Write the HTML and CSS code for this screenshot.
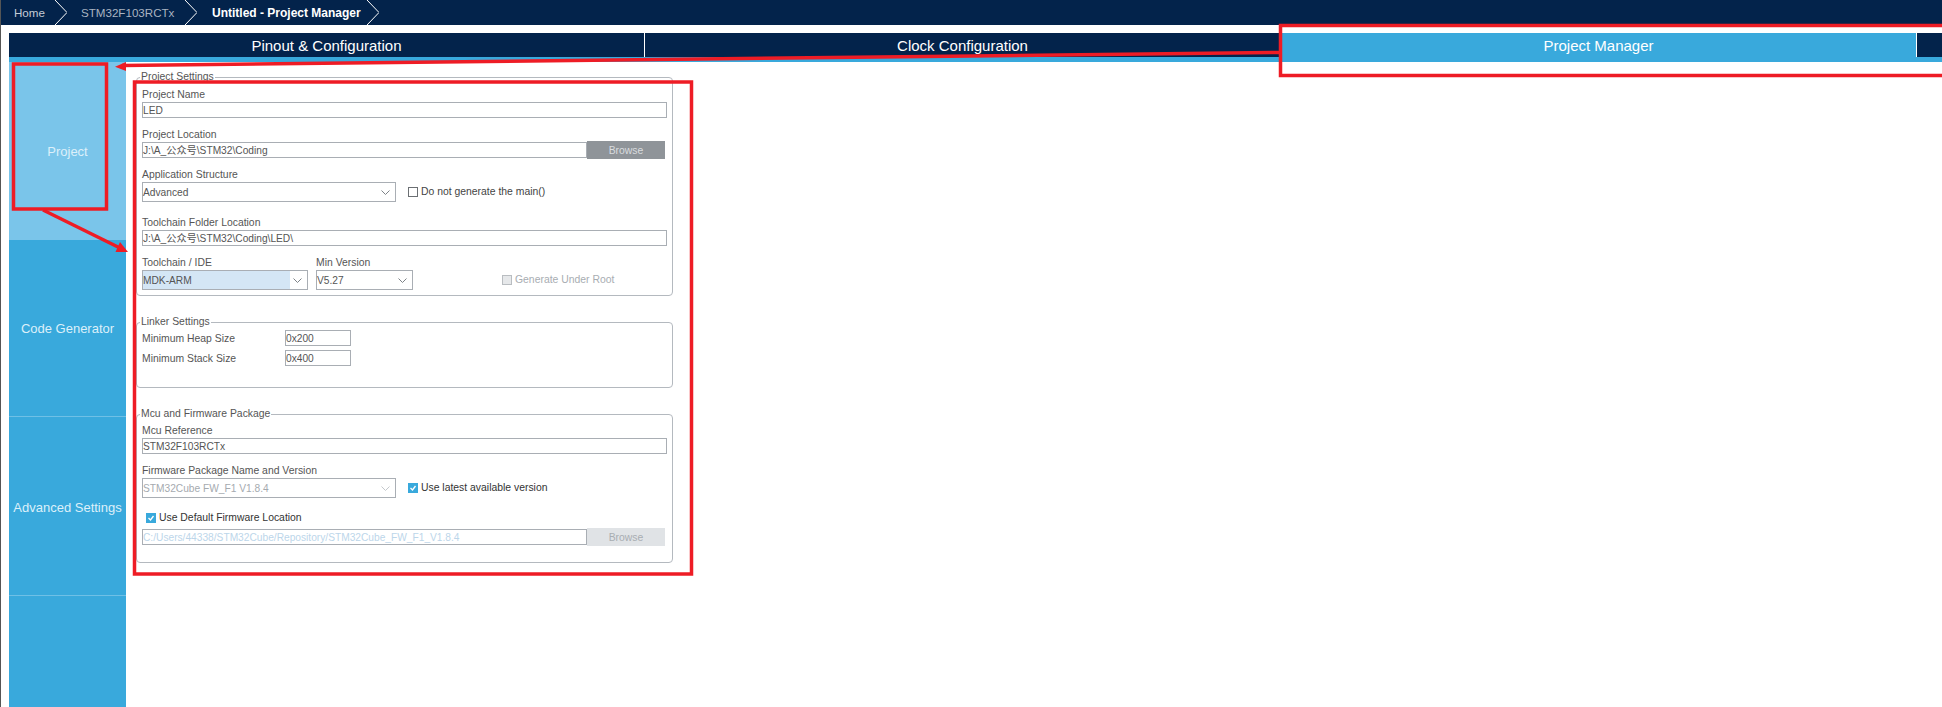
FILE: index.html
```html
<!DOCTYPE html>
<html lang="en">
<head>
<meta charset="UTF-8">
<meta name="viewport" content="width=device-width, initial-scale=1.0">
<title>Untitled - Project Manager</title>
<link rel="stylesheet" href="styles.css">
</head>
<body>
<nav class="crumbs">
    <span class="crumb crumb-home">Home</span>
    <svg class="chevron chevron-first" viewBox="0 0 12 25"><path d="M0 0 L12 12.5 L0 25"/></svg>
    <span class="crumb crumb-mcu">STM32F103RCTx</span>
    <svg class="chevron" viewBox="0 0 12 25"><path d="M0 0 L12 12.5 L0 25"/></svg>
    <span class="crumb crumb-current">Untitled - Project Manager</span>
    <svg class="chevron" viewBox="0 0 12 25"><path d="M0 0 L12 12.5 L0 25"/></svg>
</nav>

<div class="tabs">
    <div class="tab">Pinout &amp; Configuration</div>
    <div class="tab">Clock Configuration</div>
    <div class="tab tab-active">Project Manager</div>
    <div class="tab"></div>
</div>
<div class="strip"></div>

<div class="main">
    <aside class="side">
        <div class="side-item side-project side-active">Project</div>
        <div class="side-item side-code">Code Generator</div>
        <div class="side-item side-advanced">Advanced Settings</div>
        <div class="side-item side-rest"></div>
    </aside>

    <form class="content">
        <fieldset class="group">
            <legend>Project Settings</legend>
            <div class="field">
                <label>Project Name</label>
                <div class="input">LED</div>
            </div>
            <div class="field">
                <label>Project Location</label>
                <div class="row">
                    <div class="input input-path">J:\A_公众号\STM32\Coding</div>
                    <button type="button" class="browse">Browse</button>
                </div>
            </div>
            <div class="field field-wide">
                <label>Application Structure</label>
                <div class="row">
                    <div class="select select-long">
                        <span>Advanced</span>
                        <svg class="arrow" viewBox="0 0 9 5"><path d="M0.5 0.5 L4.5 4.5 L8.5 0.5"/></svg>
                    </div>
                    <div class="check"><i class="box"></i>Do not generate the main()</div>
                </div>
            </div>
            <div class="field">
                <label>Toolchain Folder Location</label>
                <div class="input">J:\A_公众号\STM32\Coding\LED\</div>
            </div>
            <div class="field field-last">
                <div class="row row-tool">
                    <div>
                        <label>Toolchain / IDE</label>
                        <div class="select select-ide">
                            <span class="picked">MDK-ARM</span>
                            <svg class="arrow" viewBox="0 0 9 5"><path d="M0.5 0.5 L4.5 4.5 L8.5 0.5"/></svg>
                        </div>
                    </div>
                    <div>
                        <label>Min Version</label>
                        <div class="select select-version">
                            <span>V5.27</span>
                            <svg class="arrow" viewBox="0 0 9 5"><path d="M0.5 0.5 L4.5 4.5 L8.5 0.5"/></svg>
                        </div>
                    </div>
                    <div class="check check-off check-root"><i class="box"></i>Generate Under Root</div>
                </div>
            </div>
        </fieldset>

        <fieldset class="group group-linker">
            <legend>Linker Settings</legend>
            <div class="size-row">
                <label>Minimum Heap Size</label>
                <div class="input input-size">0x200</div>
            </div>
            <div class="size-row">
                <label>Minimum Stack Size</label>
                <div class="input input-size">0x400</div>
            </div>
        </fieldset>

        <fieldset class="group group-mcu">
            <legend>Mcu and Firmware Package</legend>
            <div class="field">
                <label>Mcu Reference</label>
                <div class="input">STM32F103RCTx</div>
            </div>
            <div class="field field-wide">
                <label>Firmware Package Name and Version</label>
                <div class="row">
                    <div class="select select-long select-off">
                        <span>STM32Cube FW_F1 V1.8.4</span>
                        <svg class="arrow" viewBox="0 0 9 5"><path d="M0.5 0.5 L4.5 4.5 L8.5 0.5"/></svg>
                    </div>
                    <div class="check check-dark">
                        <i class="box box-on"><svg viewBox="0 0 10 10"><path d="M2.5 5 L4.5 7 L7.5 3"/></svg></i>Use latest available version
                    </div>
                </div>
            </div>
            <div class="check check-default">
                <i class="box box-on"><svg viewBox="0 0 10 10"><path d="M2.5 5 L4.5 7 L7.5 3"/></svg></i>Use Default Firmware Location
            </div>
            <div class="row">
                <div class="input input-path input-off">C:/Users/44338/STM32Cube/Repository/STM32Cube_FW_F1_V1.8.4</div>
                <button type="button" class="browse browse-off">Browse</button>
            </div>
        </fieldset>
    </form>
</div>

<!-- red marks drawn on top of the screenshot -->
<svg class="marks" viewBox="0 0 1942 707">
    <rect x="13.5" y="64" width="93" height="145"/>
    <rect x="134.5" y="82" width="557" height="492"/>
    <path d="M1950 25.5 H1280.5 V75.5 H1950"/>
    <path d="M1280 52.5 L122 65.5"/>
    <polygon class="head" points="115,66.7 126,62 126,71"/>
    <path d="M43 210 L120 248"/>
    <polygon class="head" points="128,252 115.5,252 120,242"/>
</svg>
</body>
</html>
```

FILE: styles.css
```css
* {
    box-sizing: border-box;
}

html, body {
    height: 100%;
    margin: 0;
    overflow: hidden;
}

body {
    position: relative;
    display: flex;
    flex-direction: column;
    border-left: 1px solid #555;
    background-color: #fff;
    color: #555;
    font-family: "Liberation Sans", Arial, "Noto Sans CJK SC", sans-serif;
    font-size: 10.4px;
}

/* breadcrumb bar */
.crumbs {
    display: flex;
    align-items: center;
    height: 25px;
    padding-left: 13px;
    background-color: #03234b;
    flex-shrink: 0;
}

.crumb {
    font-size: 11.6px;
    color: #c3ccd6;
}

.crumb-home {
    width: 41px;
}

.crumb-mcu {
    width: 104px;
    color: #a9b4c1;
}

.crumb-current {
    width: 155px;
    color: #fff;
    font-weight: bold;
    font-size: 12px;
}

.chevron {
    width: 12px;
    height: 25px;
    margin-right: 15px;
    flex-shrink: 0;
}

.chevron-first {
    margin-right: 14px;
}

.chevron path {
    fill: none;
    stroke: #fff;
    stroke-width: 1;
}

/* main tabs */
.tabs {
    display: grid;
    grid-template-columns: 636px 636px 636px 1fr;
    height: 24px;
    margin: 8px 0 0 8px;
    background-color: #03234b;
    flex-shrink: 0;
}

.tab {
    display: flex;
    align-items: center;
    justify-content: center;
    padding-top: 1px;
    border-right: 1px solid #fff;
    color: #fff;
    font-size: 15px;
}

.tab:last-child {
    border-right: none;
}

.tab-active {
    background-color: #39a9dc;
}

.strip {
    height: 5px;
    margin-left: 8px;
    background-color: #39a9dc;
    flex-shrink: 0;
}

.main {
    display: flex;
    flex: 1;
    min-height: 0;
    padding-left: 8px;
}

/* left menu */
.side {
    display: flex;
    flex-direction: column;
    width: 117px;
    background-color: #39a9dc;
}

.side-item {
    display: flex;
    align-items: center;
    justify-content: center;
    border-bottom: 1px solid #6fc0e6;
    color: #dcf0fa;
    font-size: 13px;
}

.side-project {
    height: 178px;
}

.side-code {
    height: 177px;
}

.side-advanced {
    height: 179px;
    padding-top: 3px;
}

.side-rest {
    flex: 1;
    border-bottom: none;
}

.side-active {
    background-color: #7ac5ea;
    border-bottom: none;
}

/* settings panel */
.content {
    width: 547px;
    padding: 9px 0 0 10px;
    margin: 0;
}

.group {
    width: 537px;
    margin: 0 0 20px;
    padding: 4px 5px 5px;
    border: 1px solid #b4b9bf;
    border-radius: 4px;
}

.group-linker {
    padding: 2px 5px 21px;
}

.group-mcu {
    padding: 3px 5px 17px;
}

legend {
    padding: 0 1px;
    margin-left: -2px;
    line-height: 12px;
    font-size: 10.4px;
}

label {
    display: block;
    line-height: 14px;
    padding-top: 1px;
}

.field {
    margin-bottom: 9px;
}

.field-wide {
    margin-bottom: 13px;
}

.field-last {
    margin-bottom: 0;
}

.row {
    display: flex;
    align-items: center;
}

.row-tool {
    align-items: flex-end;
}

.input {
    height: 16px;
    line-height: 16px;
    border: 1px solid #a9aeb4;
    background-color: #fff;
    color: #555;
    font-size: 10.2px;
    white-space: nowrap;
}

.input-path {
    width: 445px;
    flex-shrink: 0;
}

.input-off {
    color: #bcd6ea;
}

.input-size {
    width: 66px;
}

.browse {
    width: 78px;
    height: 18px;
    margin: -1px 0;
    padding: 1px 0 0;
    border: none;
    background-color: #8f9499;
    color: #d9dcdf;
    font-family: inherit;
    font-size: 10.4px;
}

.browse-off {
    background-color: #e0e3e6;
    color: #a8adb2;
}

.select {
    display: flex;
    align-items: center;
    justify-content: space-between;
    height: 20px;
    padding: 0 5px 0 0;
    border: 1px solid #a9aeb4;
    background-color: #fff;
    color: #555;
    font-size: 10.2px;
    white-space: nowrap;
}

.select-long {
    width: 254px;
}

.select-ide {
    width: 166px;
    margin-right: 8px;
}

.select-version {
    width: 97px;
}

.select-off {
    color: #a5aaaf;
}

.picked {
    display: flex;
    align-items: center;
    align-self: stretch;
    width: 147px;
    background-color: #d4e6f5;
}

.arrow {
    width: 9px;
    height: 5px;
    flex-shrink: 0;
}

.arrow path {
    fill: none;
    stroke: #7d8287;
    stroke-width: 1;
}

.select-off .arrow path {
    stroke: #c4c8cc;
}

.check {
    display: flex;
    align-items: center;
    line-height: 14px;
    margin-left: 12px;
    color: #444;
    white-space: nowrap;
}

.check-dark {
    color: #333;
}

.check-off {
    color: #a8adb2;
}

.check-root {
    height: 20px;
    margin-left: 89px;
}

.check-default {
    margin: 0 0 4px 4px;
    color: #333;
}

.box {
    display: block;
    width: 10px;
    height: 10px;
    margin-right: 3px;
    border: 1px solid #6b6f73;
    background-color: #fff;
}

.check-off .box {
    border-color: #b9bdc1;
    background-color: #e6e8ea;
}

.box-on {
    border: none;
    background-color: #39a9dc;
}

.box-on svg {
    display: block;
    width: 10px;
    height: 10px;
}

.box-on path {
    fill: none;
    stroke: #fff;
    stroke-width: 1.3;
}

.size-row {
    display: flex;
    align-items: center;
    margin-bottom: 4px;
}

.size-row:last-child {
    margin-bottom: 0;
}

.size-row label {
    width: 143px;
    padding: 1px 0 0;
}

/* annotation overlay */
.marks {
    position: absolute;
    top: 0;
    left: -1px;
    width: 1942px;
    height: 707px;
    pointer-events: none;
}

.marks rect, .marks path {
    fill: none;
    stroke: #ee1c25;
    stroke-width: 3.5;
}

.marks .head {
    fill: #ee1c25;
}
```
